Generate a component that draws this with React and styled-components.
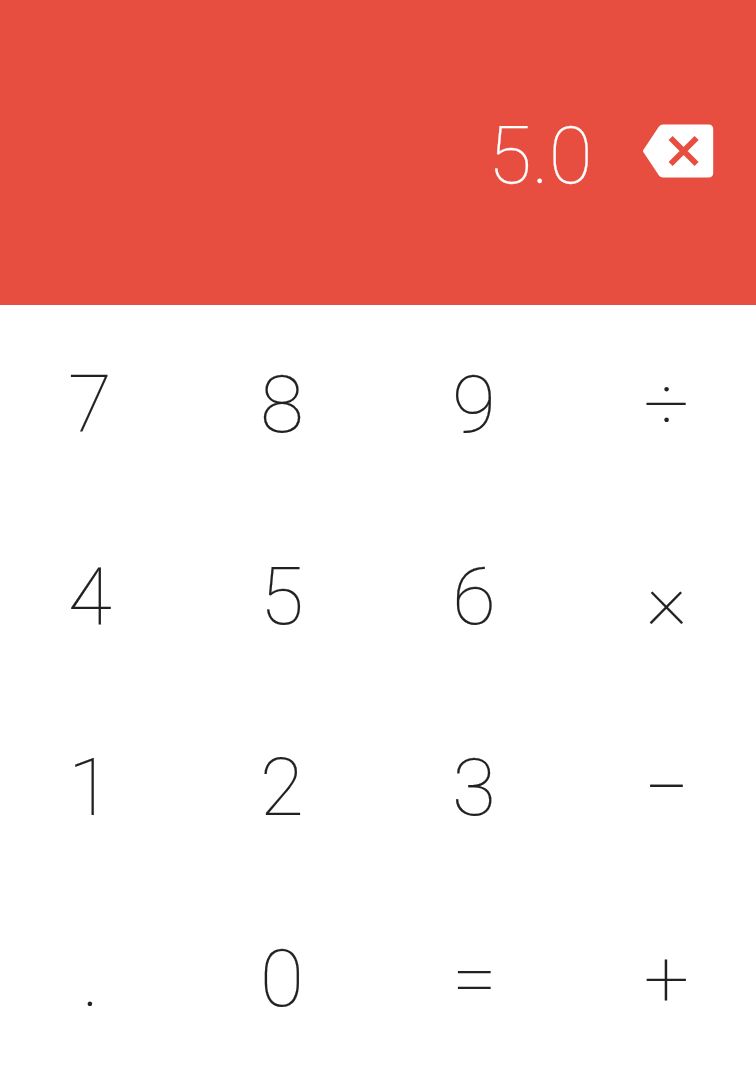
import React from 'react';
import styled, { createGlobalStyle } from 'styled-components';

const GlobalStyle = createGlobalStyle`
  * { box-sizing: border-box; }
  body { margin: 0; background: #fff; }
`;

const Calculator = styled.main`
  display: flex;
  flex-direction: column;
  width: 756px;
  height: 1068px;
  overflow: hidden;
  font-family: Roboto, sans-serif;
  font-weight: 100;
  font-size: 80px;
  line-height: 94px;
`;

const Display = styled.header`
  display: flex;
  align-items: flex-start;
  justify-content: flex-end;
  flex: none;
  height: 305px;
  padding: 109px 42px 0 0;
  color: #fff;
  background: #e84e40;
`;

const Value = styled.output`
  margin-right: 49.4px;
  -webkit-text-stroke: 0.25px currentColor;
`;

const DeleteButton = styled.button`
  margin: 15px 0 0;
  border: 0;
  padding: 0;
  background: none;
  line-height: 0;
`;

const Keypad = styled.section`
  display: grid;
  grid-template-columns: repeat(4, 192px);
  grid-template-rows: 192px repeat(3, 191px);
`;

const Key = styled.button`
  display: flex;
  align-items: flex-start;
  justify-content: center;
  border: 0;
  padding: 53px ${(p) => (p.$symbol ? 11 : 12)}px 0 0;
  background: none;
  font: inherit;
  color: #212121;
  -webkit-text-stroke: 0.2px currentColor;
`;

const keys = ['7', '8', '9', '÷', '4', '5', '6', '×', '1', '2', '3', '−', '.', '0', '=', '+'];

export default function App() {
  return (
    <Calculator>
      <GlobalStyle />
      <Display>
        <Value>5.0</Value>
        <DeleteButton aria-label="Delete">
          <svg width="72" height="54" viewBox="0 0 72 54">
            <path d="M21 .5H66.5Q71.2 .5 71.2 5.2V48.8Q71.2 53.5 66.5 53.5H21Q18.4 53.5 16.8 51.2L1.3 28Q.7 27 1.3 26L16.8 2.8Q18.4 .5 21 .5Z" fill="#fff" />
            <path d="M28.6 14L54.6 40M54.6 14L28.6 40" stroke="#e84e40" strokeWidth="5.8" />
          </svg>
        </DeleteButton>
      </Display>
      <Keypad>
        {keys.map((k) => (
          <Key key={k} $symbol={'÷×+.=−'.includes(k)}>{k}</Key>
        ))}
      </Keypad>
    </Calculator>
  );
}
